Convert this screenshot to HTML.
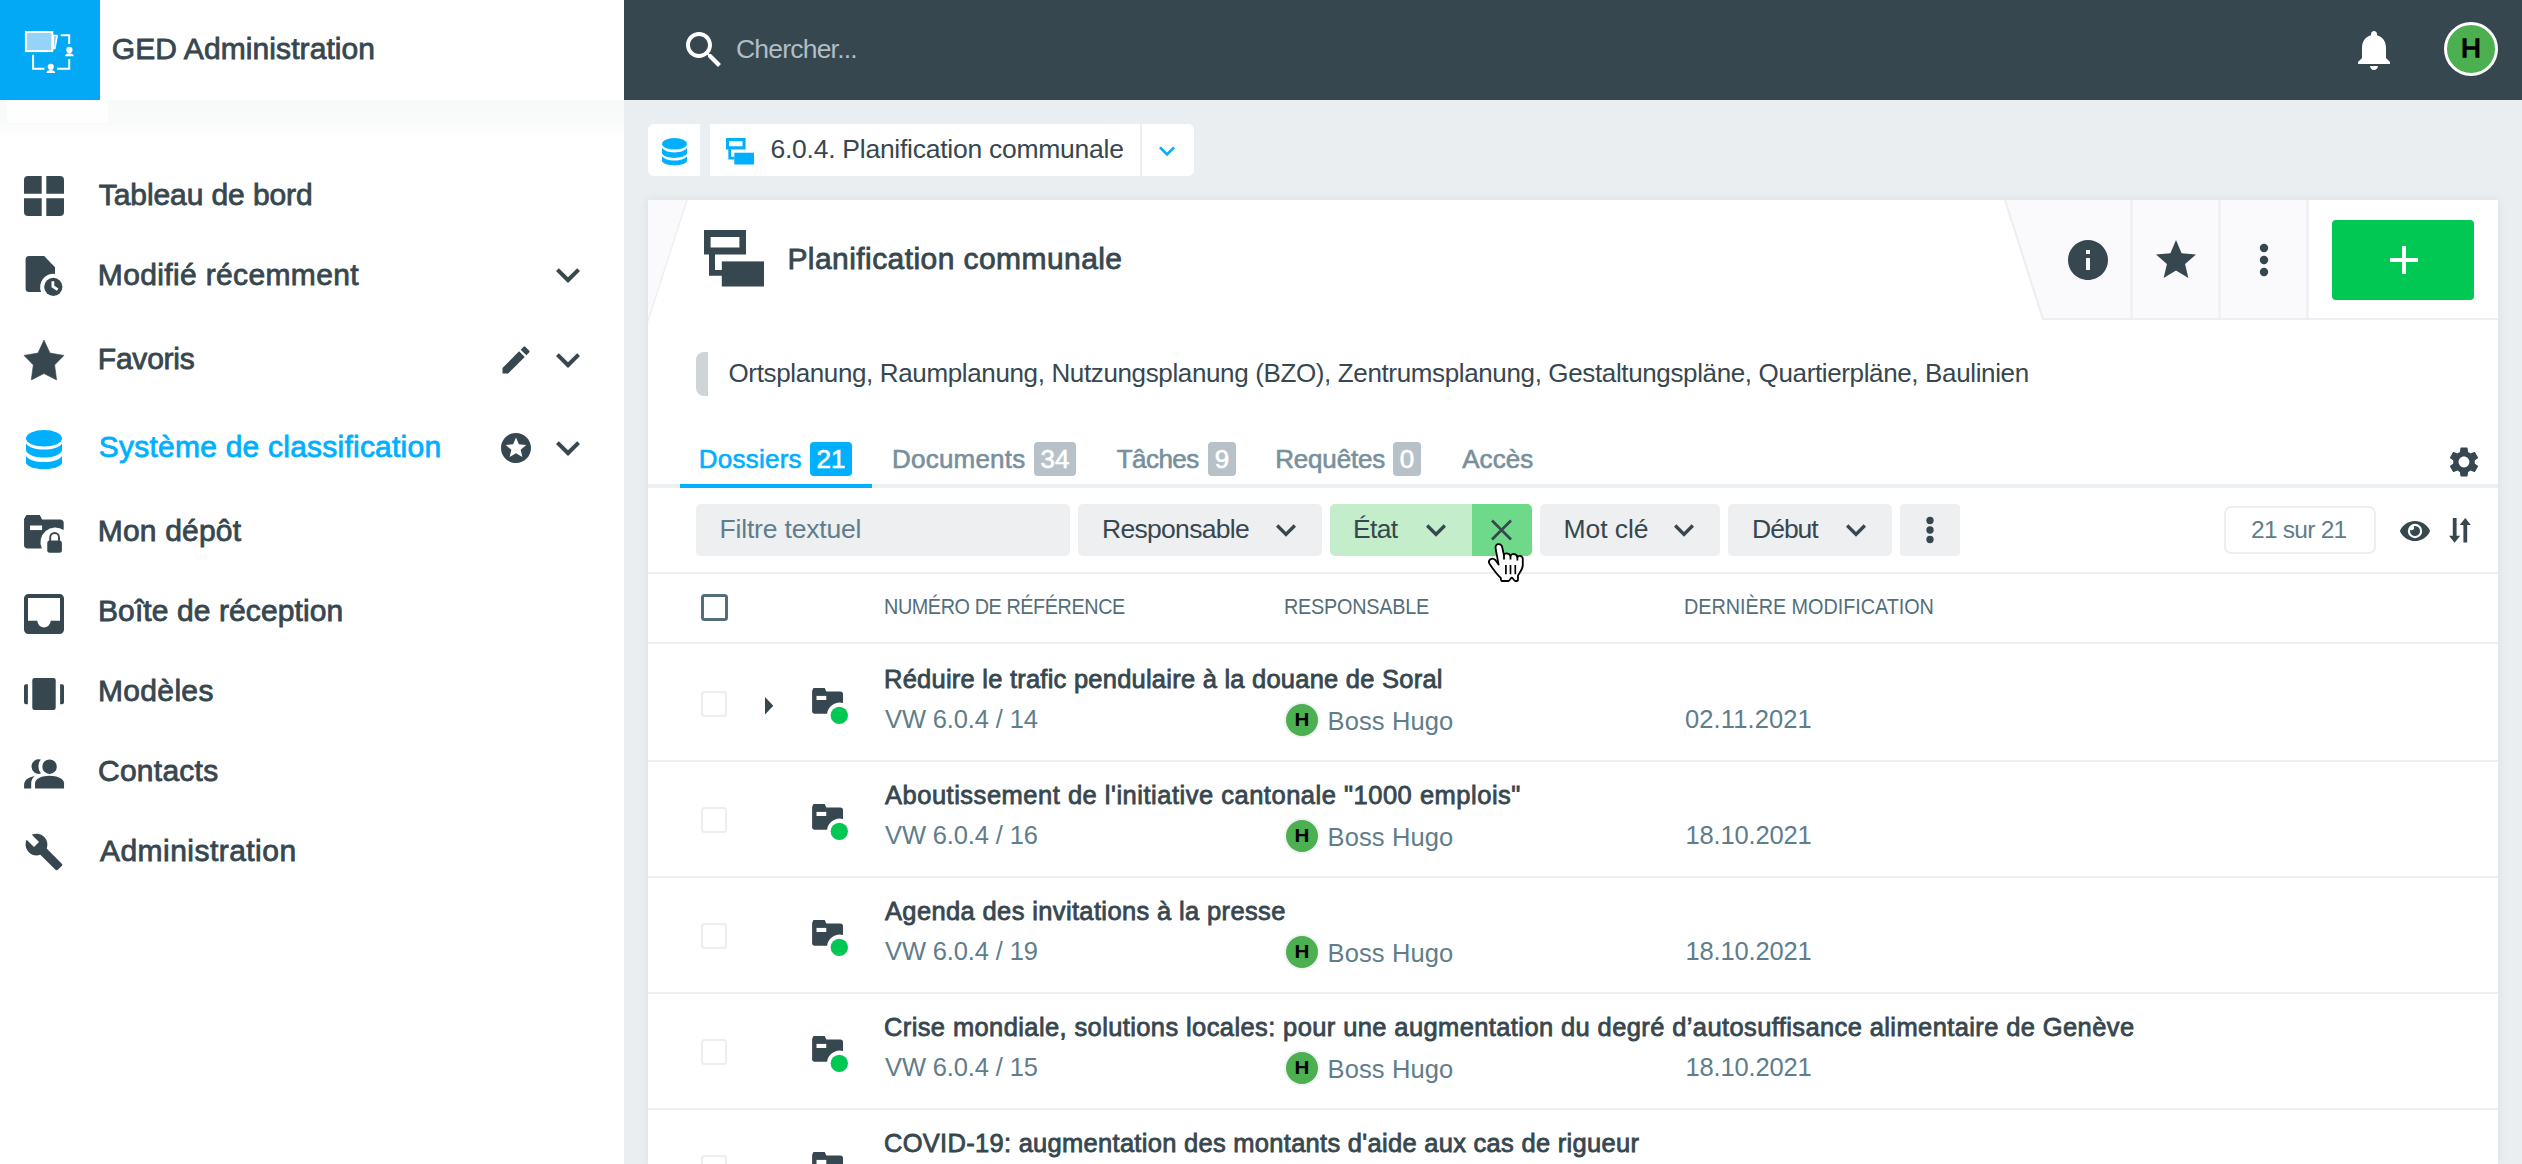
<!DOCTYPE html>
<html lang="fr">
<head>
<meta charset="utf-8">
<title>GED Administration</title>
<style>
*{box-sizing:border-box;margin:0;padding:0}
html,body{width:2522px;height:1164px;overflow:hidden;background:#ebeef1;font-family:"Liberation Sans",sans-serif;color:#37474f}
.abs{position:absolute}
.t{position:absolute;white-space:nowrap;line-height:1;transform-origin:0 50%}
.med{-webkit-text-stroke:0.8px currentColor}
.tab{-webkit-text-stroke-width:0.6px}
svg{position:absolute;display:block;overflow:visible}
/* sidebar */
#side{position:absolute;left:0;top:0;width:624px;height:1164px;background:#fff}
#logo{position:absolute;left:0;top:0;width:100px;height:100px;background:#03a9f4}
#sideshadow{position:absolute;left:0;top:100px;width:624px;height:38px;background:linear-gradient(#f8f9f9,#f9fafa 60%,#fff)}
.nav{font-size:30px;left:98px;color:#37474f}
/* topbar */
#top{position:absolute;left:624px;top:0;width:1898px;height:100px;background:#37474f}
/* breadcrumb */
.bc{position:absolute;top:124px;height:52px;background:#fff}
/* card */
#card{position:absolute;left:648px;top:200px;width:1850px;height:964px;background:#fff;overflow:hidden;box-shadow:0 0 9px rgba(55,71,79,0.09)}
.hl{position:absolute;left:0;width:1850px;height:2px;background:#eceff1}
.fbtn{position:absolute;top:304px;height:52px;background:#eeeff1;border-radius:5px}
.ftxt{font-size:26px;color:#37474f}
.th{font-size:21.5px;color:#546e7a;top:396px}
.row{position:absolute;left:0;width:1850px;height:116px}
.row .ttl{font-size:25px;left:236px;top:23px;color:#37474f}
.row .sub{font-size:25px;top:63px;color:#607d8b}
.cb{position:absolute;left:52.700px;top:46.500px;width:26.500px;height:26.500px;border:2.600px solid #eceff1;border-radius:3.500px}
.av{position:absolute;left:638px;top:60px;width:32px;height:32px;border-radius:50%;background:#4caf50;box-shadow:0 0 0 2px #f1f3f4}
.av b{position:absolute;left:0;top:0;width:32px;text-align:center;font-size:19px;line-height:32px;color:#000;transform:scaleX(1.08)}
</style>
</head>
<body>
<!-- SIDEBAR -->
<div id="side">
  <div id="sideshadow"></div>
  <div class="abs" style="left:7px;top:100px;width:101px;height:22.500px;background:#fefefe"></div>
  <div id="logo">
    <svg style="left:0;top:0" width="100" height="100" viewBox="0 0 100 100" fill="none" stroke="#fff" stroke-width="2">
      <path d="M53.300 35.600H57.200L54.900 48.500H53.300z" fill="#96d3f9" stroke="#fff" stroke-width="1.500" stroke-linejoin="round"/>
      <rect x="25.900" y="32" width="26.400" height="19.100" fill="#96d3f9" stroke="#fff" stroke-width="2"/>
      <path d="M60.700 35.200H69.200V43.900M69.200 58.900V68.800H57.100M44.500 68.800H33.100V54.700"/>
      <circle cx="69.400" cy="49.900" r="3.100" fill="#fff" stroke="none"/>
      <path d="M64.900 56.300c.3-2.200 2.200-3.100 4.500-3.100s4.200.9 4.500 3.100z" fill="#fff" stroke="none"/>
      <circle cx="50.800" cy="66.800" r="3.100" fill="#fff" stroke="none"/>
      <path d="M46.300 73.100c.3-2.200 2.200-3.100 4.500-3.100s4.200.9 4.500 3.100z" fill="#fff" stroke="none"/>
    </svg>
  </div>
  <div class="t med" style="left:112px;top:34.1px;font-size:30px;letter-spacing:0.085px;margin-left:-0.2px">GED Administration</div>

  <!-- nav icons -->
  <svg style="left:24px;top:176px" width="40" height="40" viewBox="0 0 40 40" fill="#37474f">
    <path d="M4 0h13.7v17.7H0V4a4 4 0 0 1 4-4zM22.3 0H36a4 4 0 0 1 4 4v13.7H22.3zM0 22.3h17.7V40H4a4 4 0 0 1-4-4zM22.3 22.3H40V36a4 4 0 0 1-4 4H22.3z"/>
  </svg>
  <svg style="left:24px;top:255px" width="40" height="42" viewBox="0 0 40 42" fill="#37474f">
    <path d="M5.100 1.100H20.150L31 12.200V18.900A13.200 13.200 0 0 0 17.060 36.900H5.100A3.500 3.500 0 0 1 1.600 33.400V4.600A3.500 3.500 0 0 1 5.100 1.100z"/>
    <circle cx="29.300" cy="31.850" r="9.150"/>
    <path d="M28.900 26.300V31.500L33.700 34.600" fill="none" stroke="#fff" stroke-width="2.800"/>
  </svg>
  <svg style="left:24px;top:340px" width="40" height="40" viewBox="0 0 40 40" fill="#37474f">
    <path d="M19.960 0L25.950 13L39.930 15.400L30.600 24.900L32.600 39.900L19.960 33.600L7.300 39.900L9.300 24.900L0 15.400L14 13z" stroke="#37474f" stroke-width="0.600" stroke-linejoin="round"/>
  </svg>
  <svg style="left:26px;top:430px" width="36" height="40" viewBox="0 0 36 40" fill="#00b0ff">
    <ellipse cx="18" cy="8.300" rx="18" ry="8.300"/>
    <path d="M0 13.5c3 4 9.500 6 18 6s15-2 18-6v7.500c-3 4.500-9.500 6.500-18 6.500s-15-2-18-6.500z"/>
    <path d="M0 26C3 30 9.500 32 18 32S33 30 36 26V33.300C34 37 26.500 39.300 18 39.300S2 37 0 33.300z"/>
  </svg>
  <svg style="left:24px;top:514px" width="40" height="40" viewBox="0 0 40 40" fill="#37474f">
    <path d="M2.400 1.100H15.800L18.100 5.500H36.200A3.500 3.500 0 0 1 39.700 9V16.060A14.900 14.900 0 0 0 17.800 34.600H3.500A3.500 3.500 0 0 1 0.050 31.100V5z"/>
    <rect x="6" y="11.500" width="12.100" height="4.550" fill="#fff"/>
    <rect x="23.250" y="26.400" width="14.650" height="12.300" rx="2.500"/>
    <path d="M26.200 27.500V23.400a4.400 4.400 0 0 1 8.800 0V27.500" fill="none" stroke="#37474f" stroke-width="1.900"/>
  </svg>
  <svg style="left:24px;top:594px" width="40" height="40" viewBox="0 0 41 41" fill="#37474f">
    <path d="M4.500 0h32A4.500 4.500 0 0 1 41 4.500v32a4.500 4.500 0 0 1-4.500 4.500h-32A4.500 4.500 0 0 1 0 36.500v-32A4.500 4.500 0 0 1 4.500 0zM4.100 4.100V27.500h9.600a6.800 6.800 0 0 0 13.600 0h9.600V4.100z" fill-rule="evenodd"/>
  </svg>
  <svg style="left:24px;top:678px" width="40" height="32" viewBox="0 0 41 33" preserveAspectRatio="none" fill="#37474f">
    <rect x="8.500" y="0" width="24" height="33" rx="2.300"/>
    <path d="M2 6.500H4V27H2A2 2 0 0 1 0 25V8.500A2 2 0 0 1 2 6.500zM37 6.500H39A2 2 0 0 1 41 8.500V25A2 2 0 0 1 39 27H37z"/>
  </svg>
  <svg style="left:24px;top:759px" width="41" height="30" viewBox="0 0 41 30" fill="#37474f">
    <circle cx="25.550" cy="7.650" r="7.250"/>
    <path d="M11.050 29.450V24.300C11.050 19.500 18.500 16.800 25.500 16.800S40.040 19.500 40.040 24.300V29.450z"/>
    <path d="M16.850 0.600A7.300 7.300 0 1 0 16.850 14.600A11.300 11.300 0 0 1 16.850 0.600z"/>
    <path d="M0.100 29.450V25.500C0.100 20.500 6 17.800 10.800 17C8.500 19 7.200 21.500 7.200 24V29.450z"/>
  </svg>
  <svg style="left:24px;top:831.600px" width="40" height="40" viewBox="0 0 24 24" fill="#37474f">
    <path d="M22.700 19l-9.100-9.100c.9-2.300.4-5-1.500-6.900-2-2-5-2.400-7.400-1.300L9 6 6 9 1.600 4.700C.4 7.100.9 10.100 2.900 12.100c1.900 1.900 4.600 2.400 6.900 1.500l9.100 9.100c.4.400 1 .4 1.400 0l2.300-2.300c.5-.400.5-1.100.1-1.400z"/>
  </svg>
  <!-- nav action icons -->
  <svg style="left:544px;top:251px" width="48" height="48" viewBox="0 0 24 24" fill="#37474f"><path d="M16.590 8.590L12 13.170 7.410 8.590 6 10l6 6 6-6z"/></svg>
  <svg style="left:544px;top:336px" width="48" height="48" viewBox="0 0 24 24" fill="#37474f"><path d="M16.590 8.590L12 13.170 7.410 8.590 6 10l6 6 6-6z"/></svg>
  <svg style="left:544px;top:424px" width="48" height="48" viewBox="0 0 24 24" fill="#37474f"><path d="M16.590 8.590L12 13.170 7.410 8.590 6 10l6 6 6-6z"/></svg>
  <svg style="left:498px;top:342px" width="36" height="36" viewBox="0 0 24 24" fill="#37474f"><path d="M3 17.250V21h3.750L17.810 9.940l-3.750-3.750L3 17.250zM20.710 7.040c.390-.390.390-1.020 0-1.410l-2.340-2.340c-.390-.390-1.020-.390-1.410 0l-1.830 1.830 3.750 3.750 1.830-1.830z"/></svg>
  <svg style="left:498px;top:430px" width="36" height="36" viewBox="0 0 24 24" fill="#37474f"><path d="M11.990 2C6.470 2 2 6.480 2 12s4.470 10 9.990 10C17.520 22 22 17.520 22 12S17.520 2 11.990 2zm4.240 16L12 15.450 7.770 18l1.120-4.810-3.730-3.230 4.920-.420L12 5l1.920 4.530 4.920.420-3.730 3.230L16.230 18z"/></svg>
  <div class="t nav med" style="top:180.4px;font-size:30px;letter-spacing:-0.092px;margin-left:0.8px">Tableau de bord</div>
  <div class="t nav med" style="top:260.4px;font-size:30px;letter-spacing:0.357px;margin-left:-0.2px">Modifié récemment</div>
  <div class="t nav med" style="top:344.4px;font-size:30px;letter-spacing:-0.229px;margin-left:-0.2px">Favoris</div>
  <div class="t nav med" style="color:#00b0ff;top:432.4px;font-size:30px;letter-spacing:0.228px;margin-left:0.8px">Système de classification</div>
  <div class="t nav med" style="top:516.4px;font-size:30px;letter-spacing:0.175px;margin-left:-0.2px">Mon dépôt</div>
  <div class="t nav med" style="top:596.4px;font-size:30px;letter-spacing:0.097px;margin-left:0.0px">Boîte de réception</div>
  <div class="t nav med" style="top:676.4px;font-size:30px;letter-spacing:0.333px;margin-left:0.0px">Modèles</div>
  <div class="t nav med" style="top:756.4px;font-size:30px;letter-spacing:0.254px;margin-left:0.0px">Contacts</div>
  <div class="t nav med" style="top:836.4px;font-size:30px;letter-spacing:0.461px;margin-left:2.0px">Administration</div>
</div>
<!-- TOPBAR -->
<div id="top">
  <svg style="left:56px;top:26px" width="48" height="48" viewBox="0 0 24 24" fill="#fff"><path d="M15.500 14h-.790l-.280-.270C15.410 12.590 16 11.110 16 9.500 16 5.910 13.090 3 9.500 3S3 5.910 3 9.500 5.910 16 9.500 16c1.610 0 3.090-.590 4.230-1.570l.270.280v.790l5 4.990L20.490 19l-4.990-5zm-6 0C7.010 14 5 11.990 5 9.500S7.010 5 9.500 5 14 7.010 14 9.500 11.990 14 9.500 14z"/></svg>
  <svg style="left:1726px;top:26px" width="48" height="48" viewBox="0 0 24 24" fill="#fff"><path d="M12 22c1.100 0 2-.9 2-2h-4c0 1.100.890 2 2 2zm6-6v-5c0-3.070-1.640-5.640-4.500-6.320V4c0-.830-.670-1.500-1.500-1.500s-1.500.670-1.500 1.500v.680C7.630 5.360 6 7.920 6 11v5l-2 2v1h16v-1l-2-2z"/></svg>

  <div class="t" style="left:112px;color:#b0bec5;top:35.6px;font-size:26.5px;letter-spacing:-0.800px;margin-left:-0.0px">Chercher...</div>
  <div class="abs" style="left:1820px;top:22px;width:54px;height:54px;border-radius:50%;background:#4caf50;border:3px solid #fff"></div>
  <div class="abs" style="left:1820px;top:36px;width:54px;text-align:center;font-size:25.500px;line-height:1;font-weight:normal;-webkit-text-stroke:1.300px #000;color:#000;transform:scaleX(1.080)">H</div>
</div>
<!-- BREADCRUMB -->
<div class="bc" style="left:648px;width:52px;border-radius:6px 0 0 6px"></div>
<div class="bc" style="left:710px;width:430px"></div>
<div class="bc" style="left:1142px;width:52px;border-radius:0 6px 6px 0"></div>
<div class="t" style="left:770px;top:135.6px;font-size:26.5px;letter-spacing:-0.259px;margin-left:0.5px">6.0.4. Planification communale</div>
<svg style="left:661.500px;top:138px" width="25" height="28" viewBox="0 0 36 40" preserveAspectRatio="none" fill="#00b0ff">
  <ellipse cx="18" cy="8.300" rx="18" ry="8.300"/>
  <path d="M0 14C3 18.500 9.500 20.600 18 20.600S33 18.500 36 14V22.600C33 26.500 26.500 28.400 18 28.400S3 26.500 0 22.600z"/>
  <path d="M0 26C3 30 9.500 32 18 32S33 30 36 26V33.300C34 37 26.500 39.300 18 39.300S2 37 0 33.300z"/>
</svg>
<svg style="left:726px;top:138px" width="28" height="26.500" viewBox="0 0 60 56.500" preserveAspectRatio="none" fill="#00b0ff">
  <path d="M0 0h42v24.500H11V40h7v5.700H5V24.500H0zM6.600 6.900v10.600h28.800V6.900z" fill-rule="evenodd"/>
  <rect x="17.800" y="31.400" width="42.200" height="25.100"/>
</svg>
<svg style="left:1151px;top:134.500px" width="32" height="32" viewBox="0 0 24 24" fill="#00b0ff"><path d="M16.590 8.590L12 13.170 7.410 8.590 6 10l6 6 6-6z"/></svg>
<!-- CARD -->
<div id="card">
  <!-- header -->
  <svg style="left:0;top:0" width="1850" height="122" viewBox="0 0 1850 122">
    <polygon points="0,0 39,0 0,121" fill="#fafafc"/>
    <line x1="39" y1="0" x2="0" y2="121" stroke="#eceff1" stroke-width="1.400"/>
    <polygon points="1357,0 1660,0 1660,119 1395,119" fill="#fafafc"/>
    <polyline points="1357,0 1395,119 1850,119" fill="none" stroke="#eceff1" stroke-width="2.2"/>
    <line x1="1483.500" y1="0" x2="1483.500" y2="119" stroke="#eceff1" stroke-width="2.2"/>
    <line x1="1571.500" y1="0" x2="1571.500" y2="119" stroke="#eceff1" stroke-width="2.2"/>
    <line x1="1659.500" y1="0" x2="1659.500" y2="119" stroke="#eceff1" stroke-width="2.2"/>
  </svg>

  <svg style="left:56px;top:30px" width="60" height="56.500" viewBox="0 0 60 56.500" fill="#37474f">
    <path d="M0 0h42v24.500H11V40h7v5.700H5V24.500H0zM6.600 6.900v10.600h28.800V6.900z" fill-rule="evenodd"/>
    <rect x="17.800" y="31.400" width="42.200" height="25.100"/>
  </svg>
  <svg style="left:1416px;top:36px" width="48" height="48" viewBox="0 0 24 24" fill="#37474f"><path d="M12 2C6.480 2 2 6.480 2 12s4.480 10 10 10 10-4.480 10-10S17.520 2 12 2zm1 15h-2v-6h2v6zm0-8h-2V7h2v2z"/></svg>
  <svg style="left:1504px;top:36px" width="48" height="48" viewBox="0 0 24 24" fill="#37474f"><path d="M12 17.270L18.180 21l-1.640-7.030L22 9.240l-7.190-.610L12 2 9.190 8.630 2 9.240l5.460 4.730L5.820 21z"/></svg>
  <svg style="left:1592px;top:36px" width="48" height="48" viewBox="0 0 24 24" fill="#37474f"><circle cx="12" cy="6" r="2.100"/><circle cx="12" cy="12" r="2.100"/><circle cx="12" cy="18" r="2.100"/></svg>
  <div class="t med" style="left:140px;top:44.0px;font-size:30px;letter-spacing:0.431px;margin-left:-0.6px">Planification communale</div>
  <div class="abs" style="left:1684px;top:20px;width:142px;height:80px;background:#00c853;border-radius:4px"></div>
  <svg style="left:1732px;top:36px" width="48" height="48" viewBox="0 0 24 24" fill="#fff"><path d="M19 13h-6v6h-2v-6H5v-2h6V5h2v6h6v2z"/></svg>
  <!-- description -->
  <div class="abs" style="left:48px;top:152px;width:12px;height:44px;background:#cfd4d7;border-radius:8px 0 0 8px"></div>
  <div class="t" style="left:80px;top:160.2px;font-size:26px;letter-spacing:-0.366px;margin-left:0.5px">Ortsplanung, Raumplanung, Nutzungsplanung (BZO), Zentrumsplanung, Gestaltungspläne, Quartierpläne, Baulinien</div>
  <!-- tabs -->
  <div class="t med tab" style="left:52px;color:#00b0ff;top:245.8px;font-size:26px;letter-spacing:0.238px;margin-left:-1.2px">Dossiers</div>
  <div class="t med tab" style="left:244px;color:#78909c;top:245.8px;font-size:26px;letter-spacing:0.217px;margin-left:0.0px">Documents</div>
  <div class="t med tab" style="left:468px;color:#78909c;top:245.8px;font-size:26px;letter-spacing:-0.560px;margin-left:0.8px">Tâches</div>
  <div class="t med tab" style="left:627px;color:#78909c;top:245.8px;font-size:26px;letter-spacing:-0.174px;margin-left:0.2px">Requêtes</div>
  <div class="t med tab" style="left:812px;color:#78909c;top:245.8px;font-size:26px;letter-spacing:0.050px;margin-left:2.2px">Accès</div>
  <div class="abs" style="left:162px;top:242px;width:42px;height:34px;background:#00b0ff;border-radius:4px"></div>
  <div class="t med tab bdg" style="left:162px;top:246px;width:42px;text-align:center;font-size:26px;color:#fff">21</div>
  <div class="abs" style="left:386px;top:242px;width:42px;height:34px;background:#b7c1c8;border-radius:4px"></div>
  <div class="t med tab bdg" style="left:386px;top:246px;width:42px;text-align:center;font-size:26px;color:#fff">34</div>
  <div class="abs" style="left:560px;top:242px;width:28px;height:34px;background:#b7c1c8;border-radius:4px"></div>
  <div class="t med tab bdg" style="left:560px;top:246px;width:28px;text-align:center;font-size:26px;color:#fff">9</div>
  <div class="abs" style="left:745px;top:242px;width:28px;height:34px;background:#b7c1c8;border-radius:4px"></div>
  <div class="t med tab bdg" style="left:745px;top:246px;width:28px;text-align:center;font-size:26px;color:#fff">0</div>
  <svg style="left:1798px;top:244px" width="36" height="36" viewBox="0 0 24 24" fill="#37474f"><path d="M19.140 12.940c.040-.3.060-.610.060-.940 0-.320-.020-.640-.070-.940l2.030-1.580c.180-.140.230-.410.120-.610l-1.920-3.320c-.120-.220-.370-.290-.590-.220l-2.390.960c-.5-.380-1.030-.7-1.620-.940l-.360-2.540c-.040-.240-.240-.410-.480-.410h-3.840c-.240 0-.430.170-.470.410l-.360 2.540c-.590.240-1.130.570-1.620.940l-2.390-.960c-.220-.080-.470 0-.590.220L2.740 8.870c-.120.210-.080.470.120.610l2.030 1.580c-.050.3-.090.630-.090.940s.020.640.070.940l-2.030 1.580c-.180.140-.230.410-.120.610l1.920 3.320c.120.220.370.290.590.220l2.390-.960c.5.380 1.030.7 1.620.940l.360 2.540c.050.240.240.410.480.410h3.840c.240 0 .440-.170.470-.410l.360-2.540c.590-.240 1.130-.560 1.620-.940l2.390.960c.220.080.470 0 .590-.220l1.920-3.320c.120-.220.070-.470-.120-.610l-2.010-1.580zM12 15.600c-1.980 0-3.600-1.620-3.600-3.600s1.620-3.600 3.600-3.600 3.600 1.620 3.600 3.600-1.620 3.600-3.600 3.600z"/></svg>
  <div class="hl" style="top:284px;height:4px"></div>
  <div class="abs" style="left:32px;top:284px;width:192px;height:4px;background:#00b0ff"></div>
  <!-- filters -->
  <div class="fbtn" style="left:48px;width:374px"></div>
  <div class="fbtn" style="left:430px;width:244px"></div>
  <div class="fbtn" style="left:682px;width:202px;background:#c3edcb"></div>
  <div class="fbtn" style="left:824px;width:60px;background:#6fd98a;border-radius:0 5px 5px 0"></div>
  <div class="fbtn" style="left:892px;width:180px"></div>
  <div class="fbtn" style="left:1080px;width:164px"></div>
  <div class="fbtn" style="left:1252px;width:60px;border-radius:4px"></div>
  <svg style="left:618px;top:309.5px" width="40" height="40" viewBox="0 0 24 24" fill="#37474f"><path d="M16.590 8.590L12 13.170 7.410 8.590 6 10l6 6 6-6z"/></svg>
  <svg style="left:768px;top:309.5px" width="40" height="40" viewBox="0 0 24 24" fill="#37474f"><path d="M16.590 8.590L12 13.170 7.410 8.590 6 10l6 6 6-6z"/></svg>
  <svg style="left:1016px;top:309.5px" width="40" height="40" viewBox="0 0 24 24" fill="#37474f"><path d="M16.590 8.590L12 13.170 7.410 8.590 6 10l6 6 6-6z"/></svg>
  <svg style="left:1188px;top:309.5px" width="40" height="40" viewBox="0 0 24 24" fill="#37474f"><path d="M16.590 8.590L12 13.170 7.410 8.590 6 10l6 6 6-6z"/></svg>
  <svg style="left:843px;top:320px" width="21" height="20" viewBox="0 0 21 20" fill="none" stroke="#37474f" stroke-width="2.700"><path d="M1 0.500l19 19M20 0.500l-19 19"/></svg>
  <svg style="left:1262px;top:310px" width="40" height="40" viewBox="0 0 24 24" fill="#37474f"><circle cx="12" cy="6.300" r="2.200"/><circle cx="12" cy="12" r="2.200"/><circle cx="12" cy="17.700" r="2.200"/></svg>
  <svg style="left:1752px;top:320.5px" width="30" height="20" viewBox="0 0 30 20" fill="#37474f">
    <path d="M15 0C8.500 0 2.800 3.800 0.200 9.300a1.600 1.600 0 0 0 0 1.400C2.800 16.200 8.500 20 15 20s12.200-3.800 14.800-9.300a1.600 1.600 0 0 0 0-1.400C27.200 3.800 21.500 0 15 0zm0 17.200a7.200 7.200 0 1 1 0-14.400 7.200 7.200 0 0 1 0 14.400z" fill-rule="evenodd"/>
    <path d="M15 5a5 5 0 1 1-4.800 3.700 2.500 2.500 0 0 0 3.500-3.500A5 5 0 0 1 15 5z"/>
  </svg>
  <svg style="left:1801.300px;top:317.800px" width="22" height="24.800" viewBox="0 0 22 24.800" fill="#37474f">
    <path d="M3.800 0h3.800v17.800h3.600L5.600 24.800 0 17.800h3.800z"/>
    <path d="M14.400 24.400h3.800V7h3.600L16.300 0 10.700 7h3.700z"/>
  </svg>
  <div class="t ftxt" style="left:72px;top:316px;color:#607d8b;font-size:26.5px;letter-spacing:-0.182px;margin-left:-0.5px">Filtre textuel</div>
  <div class="t ftxt" style="left:454px;top:316px;font-size:26.5px;letter-spacing:-0.700px;margin-left:0.0px">Responsable</div>
  <div class="t ftxt" style="left:706px;top:316px;font-size:26.5px;letter-spacing:-0.660px;margin-left:-1.0px">État</div>
  <div class="t ftxt" style="left:916px;top:316px;font-size:26.5px;letter-spacing:-0.073px;margin-left:-0.5px">Mot clé</div>
  <div class="t ftxt" style="left:1104px;top:316px;font-size:26.5px;letter-spacing:-1.000px;margin-left:0.0px">Début</div>
  <div class="abs" style="left:1576px;top:306px;width:152px;height:48px;border:2px solid #eceff1;border-radius:7px"></div>
  <div class="t" style="left:1602px;color:#607d8b;top:317.6px;font-size:24.5px;letter-spacing:-0.740px;margin-left:1.0px">21 sur 21</div>
  <div class="hl" style="top:372px"></div>
  <!-- table header -->
  <div class="abs" style="left:52.500px;top:394.300px;width:27px;height:27px;border:3px solid #546e7a;border-radius:3.500px"></div>
  <div class="t th" style="left:236px;font-size:22px;transform:scaleX(0.9);letter-spacing:-0.455px;margin-left:0.0px">NUMÉRO DE RÉFÉRENCE</div>
  <div class="t th" style="left:636px;font-size:22px;transform:scaleX(0.9);letter-spacing:-0.260px;margin-left:0.0px">RESPONSABLE</div>
  <div class="t th" style="left:1036px;font-size:22px;transform:scaleX(0.9);letter-spacing:-0.030px;margin-left:0.0px">DERNIÈRE MODIFICATION</div>
  <div class="hl" style="top:442px"></div>
  <!-- rows -->
  <div class="row" style="top:444px">
    <div class="cb"></div>
    <svg style="left:163px;top:43px" width="40" height="40" viewBox="0 0 40 40">
      <path d="M2.400 1.100H13.750L15.300 4.500H29.200A2.840 2.840 0 0 1 32.040 7.300V16.100A12.600 12.600 0 0 0 16.060 26.660H3.300A2.200 2.200 0 0 1 1.100 24.500V4z" fill="#37474f"/>
      <rect x="5.500" y="8.900" width="9.800" height="4.100" fill="#fff"/>
      <circle cx="28.300" cy="28.400" r="8.650" fill="#00c853"/>
    </svg>
    <svg style="left:116.600px;top:53.200px" width="9" height="18" viewBox="0 0 9 18" fill="#37474f"><path d="M0 0L8.300 8.750L0 17.500z"/></svg>
    <div class="t ttl med" style="left:236px;top:22.6px;font-size:25.5px;letter-spacing:0.235px;margin-left:0.0px">Réduire le trafic pendulaire à la douane de Soral</div>
    <div class="t sub" style="left:236px;font-size:25.5px;letter-spacing:-0.128px;margin-left:1.0px">VW 6.0.4 / 14</div>
    <div class="av"><b>H</b></div>
    <div class="t sub" style="left:680px;font-size:25.5px;margin-top:1.700px;letter-spacing:0.125px;margin-left:-0.5px">Boss Hugo</div>
    <div class="t sub" style="left:1036px;font-size:25.5px;letter-spacing:0.104px;margin-left:1.0px">02.11.2021</div>
  </div>
  <div class="hl" style="top:560px"></div>
  <div class="row" style="top:560px">
    <div class="cb"></div>
    <svg style="left:163px;top:43px" width="40" height="40" viewBox="0 0 40 40">
      <path d="M2.400 1.100H13.750L15.300 4.500H29.200A2.840 2.840 0 0 1 32.040 7.300V16.100A12.600 12.600 0 0 0 16.060 26.660H3.300A2.200 2.200 0 0 1 1.100 24.500V4z" fill="#37474f"/>
      <rect x="5.500" y="8.900" width="9.800" height="4.100" fill="#fff"/>
      <circle cx="28.300" cy="28.400" r="8.650" fill="#00c853"/>
    </svg>
    <div class="t ttl med" style="left:236px;top:22.6px;font-size:25.5px;letter-spacing:0.509px;margin-left:1.0px">Aboutissement de l'initiative cantonale "1000 emplois"</div>
    <div class="t sub" style="left:236px;font-size:25.5px;letter-spacing:-0.128px;margin-left:1.0px">VW 6.0.4 / 16</div>
    <div class="av"><b>H</b></div>
    <div class="t sub" style="left:680px;font-size:25.5px;margin-top:1.700px;letter-spacing:0.125px;margin-left:-0.5px">Boss Hugo</div>
    <div class="t sub" style="left:1036px;font-size:25.5px;letter-spacing:-0.170px;margin-left:1.5px">18.10.2021</div>
  </div>
  <div class="hl" style="top:676px"></div>
  <div class="row" style="top:676px">
    <div class="cb"></div>
    <svg style="left:163px;top:43px" width="40" height="40" viewBox="0 0 40 40">
      <path d="M2.400 1.100H13.750L15.300 4.500H29.200A2.840 2.840 0 0 1 32.040 7.300V16.100A12.600 12.600 0 0 0 16.060 26.660H3.300A2.200 2.200 0 0 1 1.100 24.500V4z" fill="#37474f"/>
      <rect x="5.500" y="8.900" width="9.800" height="4.100" fill="#fff"/>
      <circle cx="28.300" cy="28.400" r="8.650" fill="#00c853"/>
    </svg>
    <div class="t ttl med" style="left:236px;top:22.6px;font-size:25.5px;letter-spacing:0.363px;margin-left:1.0px">Agenda des invitations à la presse</div>
    <div class="t sub" style="left:236px;font-size:25.5px;letter-spacing:-0.128px;margin-left:1.0px">VW 6.0.4 / 19</div>
    <div class="av"><b>H</b></div>
    <div class="t sub" style="left:680px;font-size:25.5px;margin-top:1.700px;letter-spacing:0.125px;margin-left:-0.5px">Boss Hugo</div>
    <div class="t sub" style="left:1036px;font-size:25.5px;letter-spacing:-0.170px;margin-left:1.5px">18.10.2021</div>
  </div>
  <div class="hl" style="top:792px"></div>
  <div class="row" style="top:792px">
    <div class="cb"></div>
    <svg style="left:163px;top:43px" width="40" height="40" viewBox="0 0 40 40">
      <path d="M2.400 1.100H13.750L15.300 4.500H29.200A2.840 2.840 0 0 1 32.040 7.300V16.100A12.600 12.600 0 0 0 16.060 26.660H3.300A2.200 2.200 0 0 1 1.100 24.500V4z" fill="#37474f"/>
      <rect x="5.500" y="8.900" width="9.800" height="4.100" fill="#fff"/>
      <circle cx="28.300" cy="28.400" r="8.650" fill="#00c853"/>
    </svg>
    <div class="t ttl med" style="left:236px;top:22.6px;font-size:25.5px;letter-spacing:0.388px;margin-left:0.0px">Crise mondiale, solutions locales: pour une augmentation du degré d’autosuffisance alimentaire de Genève</div>
    <div class="t sub" style="left:236px;font-size:25.5px;letter-spacing:-0.128px;margin-left:1.0px">VW 6.0.4 / 15</div>
    <div class="av"><b>H</b></div>
    <div class="t sub" style="left:680px;font-size:25.5px;margin-top:1.700px;letter-spacing:0.125px;margin-left:-0.5px">Boss Hugo</div>
    <div class="t sub" style="left:1036px;font-size:25.5px;letter-spacing:-0.170px;margin-left:1.5px">18.10.2021</div>
  </div>
  <div class="hl" style="top:908px"></div>
  <div class="row" style="top:908px">
    <div class="cb"></div>
    <svg style="left:163px;top:43px" width="40" height="40" viewBox="0 0 40 40">
      <path d="M2.400 1.100H13.750L15.300 4.500H29.200A2.840 2.840 0 0 1 32.040 7.300V16.100A12.600 12.600 0 0 0 16.060 26.660H3.300A2.200 2.200 0 0 1 1.100 24.500V4z" fill="#37474f"/>
      <rect x="5.500" y="8.900" width="9.800" height="4.100" fill="#fff"/>
      <circle cx="28.300" cy="28.400" r="8.650" fill="#00c853"/>
    </svg>
    <div class="t ttl med" style="left:236px;top:22.6px;font-size:25.5px;letter-spacing:0.286px;margin-left:0.0px">COVID-19: augmentation des montants d'aide aux cas de rigueur</div>
  </div>
</div>
<svg style="left:1486px;top:542px" width="40" height="42" viewBox="0 0 40 42">
  <path d="M12.600 22.600L9.600 6.500C9.200 3.600 10.600 2.200 12.600 2.200C14.600 2.200 16 3.600 16.400 6L17.900 13C18.500 11.600 20 11.300 21.200 11.500C22.800 11.700 24 12.500 24.400 14C25 12.400 26.600 11.900 27.900 12C29.600 12.200 31 13 31.300 15C32 13.800 33.200 13.700 34.200 13.900C35.800 14.300 36.800 15.300 36.800 17L36.800 23C36.800 28 33 31 32 33.500L32 38C32 39 31.500 39 30.800 39L29.300 39C27.800 39 27.300 36 25.800 35.600C24.300 36 23.800 39 22.400 39L16 39C15 39 14.900 38.400 14.900 37.600L14.900 36.200C11 32.500 9 30 3.800 22.300C2.500 20.300 3 18.200 4.500 17.200C6.300 16 8 16.800 9.300 18Z" fill="#fff" stroke="#000" stroke-width="1.800" stroke-linejoin="round"/>
  <path d="M18 12.500V17.400M24.500 13.500V17.600M31.400 14.500V18.400" stroke="#000" stroke-width="1.800" fill="none"/>
  <path d="M19.900 23V32.300M24.500 23V32.300M29.300 23V32.300" stroke="#000" stroke-width="1.700" fill="none"/>
</svg>
</body>
</html>
